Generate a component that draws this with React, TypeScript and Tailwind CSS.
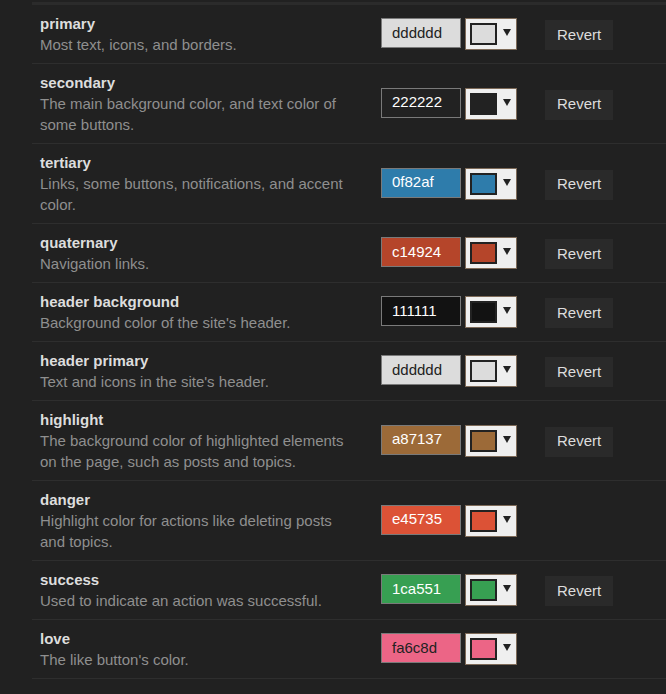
type ColorRow = {
  name: string;
  description: string;
  hex: string;
  shown: string;
  darkText?: boolean;
  revert?: boolean;
};

// "shown" is the swatch fill as it renders on this dark theme
const rows: ColorRow[] = [
  { name: "primary", description: "Most text, icons, and borders.", hex: "dddddd", shown: "#dcdcdc", darkText: true, revert: true },
  { name: "secondary", description: "The main background color, and text color of some buttons.", hex: "222222", shown: "#222222", revert: true },
  { name: "tertiary", description: "Links, some buttons, notifications, and accent color.", hex: "0f82af", shown: "#2e7cab", revert: true },
  { name: "quaternary", description: "Navigation links.", hex: "c14924", shown: "#b5452a", revert: true },
  { name: "header background", description: "Background color of the site's header.", hex: "111111", shown: "#121212", revert: true },
  { name: "header primary", description: "Text and icons in the site's header.", hex: "dddddd", shown: "#dcdcdc", darkText: true, revert: true },
  { name: "highlight", description: "The background color of highlighted elements on the page, such as posts and topics.", hex: "a87137", shown: "#9c6a38", revert: true },
  { name: "danger", description: "Highlight color for actions like deleting posts and topics.", hex: "e45735", shown: "#dc5236" },
  { name: "success", description: "Used to indicate an action was successful.", hex: "1ca551", shown: "#379f52", revert: true },
  { name: "love", description: "The like button's color.", hex: "fa6c8d", shown: "#ec6586", darkText: true },
];

function ColorControls({ row }: { row: ColorRow }) {
  return (
    <div className="flex items-center">
      <div className="flex items-start gap-1">
        <div
          className={`w-[80px] h-[30px] border border-[#7a7a7a] pl-[10px] flex items-center text-[15px] ${
            row.darkText ? "text-[#222]" : "text-white"
          }`}
          style={{ backgroundColor: row.shown }}
        >
          {row.hex}
        </div>
        <div className="w-[52px] h-[32px] border border-[#7d6a58] bg-[#efefef] flex items-center pl-[4px]">
          <div
            className="w-[27px] h-[22px] border-2 border-[#222]"
            style={{ backgroundColor: row.shown }}
          />
          {/* dropdown caret */}
          <svg width="8" height="7" viewBox="0 0 8 7" className="ml-[6px] -mt-[3px]">
            <path d="M0 0h8L4 7z" fill="#222" />
          </svg>
        </div>
      </div>
      {row.revert && (
        <button className="ml-[28px] mt-[2px] h-[30px] px-[12px] bg-[#2a2a2a] text-[#dddddd] text-[15px]">
          Revert
        </button>
      )}
    </div>
  );
}

export default function App() {
  return (
    <div
      className="min-h-[694px] bg-[#212121] pt-[2px]"
      style={{ fontFamily: '"Liberation Sans", Arial, sans-serif' }}
    >
      <div className="ml-[32px] border-t-[3px] border-[#2b2b2b]">
        {rows.map((row) => (
          <div
            key={row.name}
            className="flex items-center border-b border-[#2e2e2e] pl-[8px] py-[8px]"
          >
            <div className="w-[341px] shrink-0">
              <div className="text-[15px] font-bold text-[#dddddd] leading-[21px]">
                {row.name}
              </div>
              <div className="max-w-[310px] text-[15px] text-[#8f8f8f] leading-[21px]">
                {row.description}
              </div>
            </div>
            <ColorControls row={row} />
          </div>
        ))}
      </div>
    </div>
  );
}
